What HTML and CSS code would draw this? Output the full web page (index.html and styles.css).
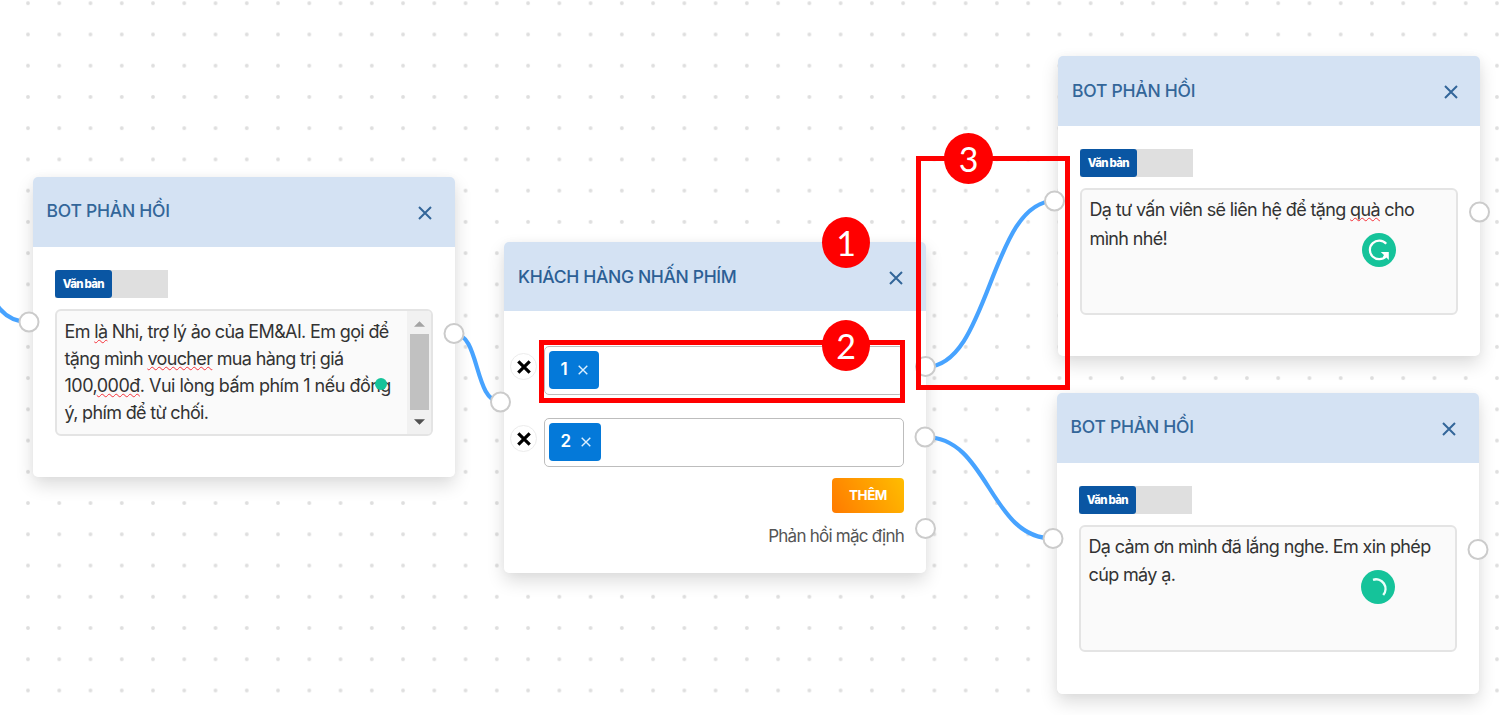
FILE: index.html
```html
<!DOCTYPE html>
<html lang="vi">
<head>
<meta charset="utf-8">
<title>Bot flow</title>
<link rel="stylesheet" href="styles.css">
</head>
<body>
<main class="canvas">
  <svg class="grid" width="1508" height="715">
    <defs><pattern id="dots" x="12.4" y="-12.4" width="31.255" height="31.24" patternUnits="userSpaceOnUse"><circle cx="15.6" cy="15.6" r="1.9" fill="#dedede"/></pattern></defs>
    <rect width="1508" height="715" fill="url(#dots)"/>
  </svg>

  <section class="node node-intro">
    <header class="head"><h2 class="title">BOT PHẢN HỒI</h2><svg class="close" viewBox="0 0 14 14"><path d="M1 1L13 13M13 1L1 13"/></svg></header>
    <div class="body">
      <div class="toggle"><span class="toggle-on">Văn bản</span></div>
      <div class="area">
        <div class="copy copy-intro">
          <p>Em <u>là</u> Nhi, trợ lý ảo của EM&amp;AI. Em gọi để</p>
          <p>tặng mình <u>voucher</u> mua hàng trị giá</p>
          <p class="l3">100,<u>000đ</u>. Vui lòng bấm phím 1 nếu đồng</p>
          <p class="l4">ý, phím để từ chối.</p>
        </div>
        <div class="scrollbar"><svg viewBox="0 0 10 5"><path fill="#a3a3a3" d="M0 5L5 0L10 5Z"/></svg><i class="thumb"></i><svg viewBox="0 0 10 5"><path fill="#505050" d="M0 0L5 5L10 0Z"/></svg></div>
      </div>
    </div>
    <i class="hint"></i>
  </section>

  <section class="node node-keys">
    <header class="head"><h2 class="title title-keys">KHÁCH HÀNG NHẤN PHÍM</h2><svg class="close" viewBox="0 0 14 14"><path d="M1 1L13 13M13 1L1 13"/></svg></header>
    <div class="keys">
      <div class="key-row"><button class="remove"><svg viewBox="0 0 14 14"><path d="M2 2L12 12M12 2L2 12"/></svg></button>
        <div class="field"><span class="tag">1<svg viewBox="0 0 10 10"><path d="M.7.7L9.3 9.3M9.3.7L.7 9.3"/></svg></span></div></div>
      <div class="key-row"><button class="remove"><svg viewBox="0 0 14 14"><path d="M2 2L12 12M12 2L2 12"/></svg></button>
        <div class="field"><span class="tag tag-wide">2<svg viewBox="0 0 10 10"><path d="M.7.7L9.3 9.3M9.3.7L.7 9.3"/></svg></span></div></div>
      <button class="add">THÊM</button>
      <p class="fallback">Phản hồi mặc định</p>
    </div>
  </section>

  <section class="node node-offer">
    <header class="head"><h2 class="title">BOT PHẢN HỒI</h2><svg class="close" viewBox="0 0 14 14"><path d="M1 1L13 13M13 1L1 13"/></svg></header>
    <div class="body">
      <div class="toggle"><span class="toggle-on">Văn bản</span></div>
      <div class="area">
        <div class="copy copy-offer">
          <p>Dạ tư vấn viên sẽ liên hệ để tặng <u>quà</u> cho</p>
          <p>mình nhé!</p>
        </div>
      </div>
    </div>
    <svg class="assist" viewBox="0 0 34 34"><circle cx="17" cy="17" r="17" fill="#15c39a"/><path d="M24.2 10.8A9.3 9.3 0 1 0 24 23.200" fill="none" stroke="#fff" stroke-width="2.200"/><path d="M18.800 19H26.800V27L24.400 24.600L22.600 25.400L21 23.800L22 22Z" fill="#fff"/></svg>
  </section>

  <section class="node node-bye">
    <header class="head"><h2 class="title">BOT PHẢN HỒI</h2><svg class="close" viewBox="0 0 14 14"><path d="M1 1L13 13M13 1L1 13"/></svg></header>
    <div class="body">
      <div class="toggle"><span class="toggle-on">Văn bản</span></div>
      <div class="area">
        <div class="copy copy-bye">
          <p>Dạ cảm ơn mình đã lắng nghe. Em xin phép</p>
          <p>cúp máy ạ.</p>
        </div>
      </div>
    </div>
    <svg class="assist" viewBox="0 0 34 34"><circle cx="17" cy="17" r="17" fill="#15c39a"/><path d="M12 9.800A9.500 9.500 0 0 1 22.2 25" fill="none" stroke="#e9fff9" stroke-width="2.4"/></svg>
  </section>

  <svg class="links" width="1508" height="715">
    <g fill="none" stroke="#47a3ff" stroke-width="4.200">
      <path d="M-22 264C-6 307 4 322 29 322"/>
      <path d="M454 333.5C480 333.5 474 402 500.500 402"/>
      <path d="M925.500 367C990 367 990 201 1054.500 201"/>
      <path d="M925 437C989 437 989 538.500 1053 538.500"/>
    </g>
    <g fill="#fff" stroke="#cbcbcb" stroke-width="2">
      <circle cx="29" cy="322" r="9.500"/><circle cx="454" cy="333.500" r="9.500"/>
      <circle cx="500.500" cy="402" r="9.500"/><circle cx="925.500" cy="366.500" r="9.500"/>
      <circle cx="925" cy="437" r="9.500"/><circle cx="925.500" cy="528.500" r="9.500"/>
      <circle cx="1054.500" cy="201" r="9.500"/><circle cx="1479.500" cy="212" r="9.500"/>
      <circle cx="1053" cy="538.500" r="9.500"/><circle cx="1478" cy="549.500" r="9.500"/>
    </g>
  </svg>

  <div class="frame frame-field"></div>
  <div class="frame frame-link"></div>
  <span class="step step-1">1</span>
  <span class="step step-2">2</span>
  <span class="step step-3">3</span>
</main>
</body>
</html>
```
FILE: styles.css
```css
* { box-sizing: border-box; margin: 0; }
body { background: #fff; font-family: Inter, "Liberation Sans", sans-serif; }
.canvas { position: relative; width: 1508px; height: 715px; overflow: hidden; }
.grid, .links { position: absolute; left: 0; top: 0; }

.node { position: absolute; width: 422px; height: 300px; border-radius: 5px; background: #fff; box-shadow: 0 8px 18px rgba(0, 0, 0, .14), 0 0 8px rgba(0, 0, 0, .03); }
.node-intro { left: 33px; top: 177px; }
.node-keys { left: 504px; top: 242px; height: 330.500px; }
.node-offer { left: 1058px; top: 56px; }
.node-bye { left: 1057px; top: 393px; height: 301px; }

.head { display: flex; justify-content: space-between; align-items: center; height: 69.500px; padding: 0 23px 0 13.500px; border-radius: 5px 5px 0 0; background: #d4e2f3; }
.title { padding-bottom: 2px; color: #336699; font-size: 17.500px; font-weight: 550; letter-spacing: -.25px; line-height: 24px; white-space: nowrap; }
.title-keys { padding-bottom: 0; color: #2c5f95; letter-spacing: -.35px; }
.node-offer .title { padding-bottom: 0; }
.node-offer .head { padding-right: 22px; padding-left: 14px; }
.node-keys .head { height: 69px; padding-left: 14px; }
.close { width: 14px; height: 14px; margin-top: 3px; fill: none; stroke: #336699; stroke-width: 2; }

.body { padding: 23.500px 22px 0; }
.toggle { width: 113px; height: 28px; background: #dfdfdf; }
.toggle-on { display: flex; align-items: center; justify-content: center; width: 56.500px; height: 28px; border-radius: 3px; background: #0a56a3; color: #fff; font-size: 11.500px; font-weight: 800; letter-spacing: -.75px; }
.area { display: flex; justify-content: space-between; width: 378px; height: 127px; margin-top: 11px; border: 2px solid #e4e4e4; border-radius: 6px; background: #fafafa; overflow: hidden; }
.copy { padding-left: 7.500px; color: #333; font-size: 18px; line-height: 27px; white-space: nowrap; }
.copy p { width: max-content; letter-spacing: -.64px; }
.copy u { text-decoration: underline wavy #f5323a 1px; text-decoration-skip-ink: none; text-underline-offset: 1px; }
.copy .l3 { letter-spacing: -.51px; }
.copy .l4 { letter-spacing: -.66px; }
.copy-intro { padding-top: 7px; }
.copy-offer { padding-top: 6px; line-height: 28.500px; }
.copy-bye { padding-top: 6px; line-height: 28px; }
.scrollbar { display: flex; flex-direction: column; align-items: center; justify-content: space-between; flex: none; width: 24px; padding: 10px 0 9px; background: #f1f1f1; }
.scrollbar svg { width: 11px; height: 6px; }
.thumb { width: 19px; height: 76px; margin-top: -2px; background: #c1c1c1; }
.hint { position: absolute; left: 342px; top: 201px; width: 12px; height: 12px; border-radius: 50%; background: #15c39a; }
.assist { position: absolute; left: 303.500px; top: 177px; width: 34px; height: 34px; }

.keys { display: flex; flex-direction: column; align-items: flex-end; padding: 35px 22px 0 6px; }
.key-row { display: flex; align-items: center; gap: 7px; margin-bottom: 23px; }
.key-row + .key-row { margin-bottom: 11px; }
.remove { display: grid; place-items: center; width: 27px; height: 27px; margin-top: -8px; padding: 0; border: 1px solid #ececec; border-radius: 50%; background: #fff; }
.remove svg { width: 16px; height: 16px; fill: none; stroke: #000; stroke-width: 2.800; }
.field { display: flex; align-items: center; width: 360px; height: 49px; padding-left: 3.500px; border: 1.500px solid #bdbdbd; border-radius: 5px; background: #fff; }
.tag { display: flex; align-items: center; gap: 10.500px; width: 50px; height: 38.500px; margin-top: -1px; padding: 0 0 2px 12px; border-radius: 4px; background: #0479d9; color: #fff; font-size: 17px; font-weight: 600; }
.tag-wide { gap: 9.500px; width: 52px; }
.tag svg { width: 10px; height: 10px; margin-top: 2px; fill: none; stroke: #dcefff; stroke-width: 1.400; }
.add { width: 72px; height: 35px; padding: 0 0 1px; border: 0; border-radius: 4px; background: linear-gradient(60deg, #ff7a00, #ffbd00); color: #fff; font: 700 13.500px Inter, sans-serif; letter-spacing: -.5px; }
.fallback { margin-top: 11px; color: #555; font-size: 17px; letter-spacing: -.75px; line-height: 24px; white-space: nowrap; }

.frame { position: absolute; border: 5px solid #f00; }
.frame-field { left: 539px; top: 340px; width: 366px; height: 63px; }
.frame-link { left: 916px; top: 156px; width: 154px; height: 234px; }
.step { position: absolute; display: grid; place-items: center; width: 48px; height: 51px; border-radius: 50%; background: #f00; color: #fff; font: 34px/1 Lato, sans-serif; }
.step-1 { left: 822px; top: 217px; }
.step-2 { left: 822px; top: 320px; }
.step-3 { left: 944px; top: 133px; width: 49px; }
```
